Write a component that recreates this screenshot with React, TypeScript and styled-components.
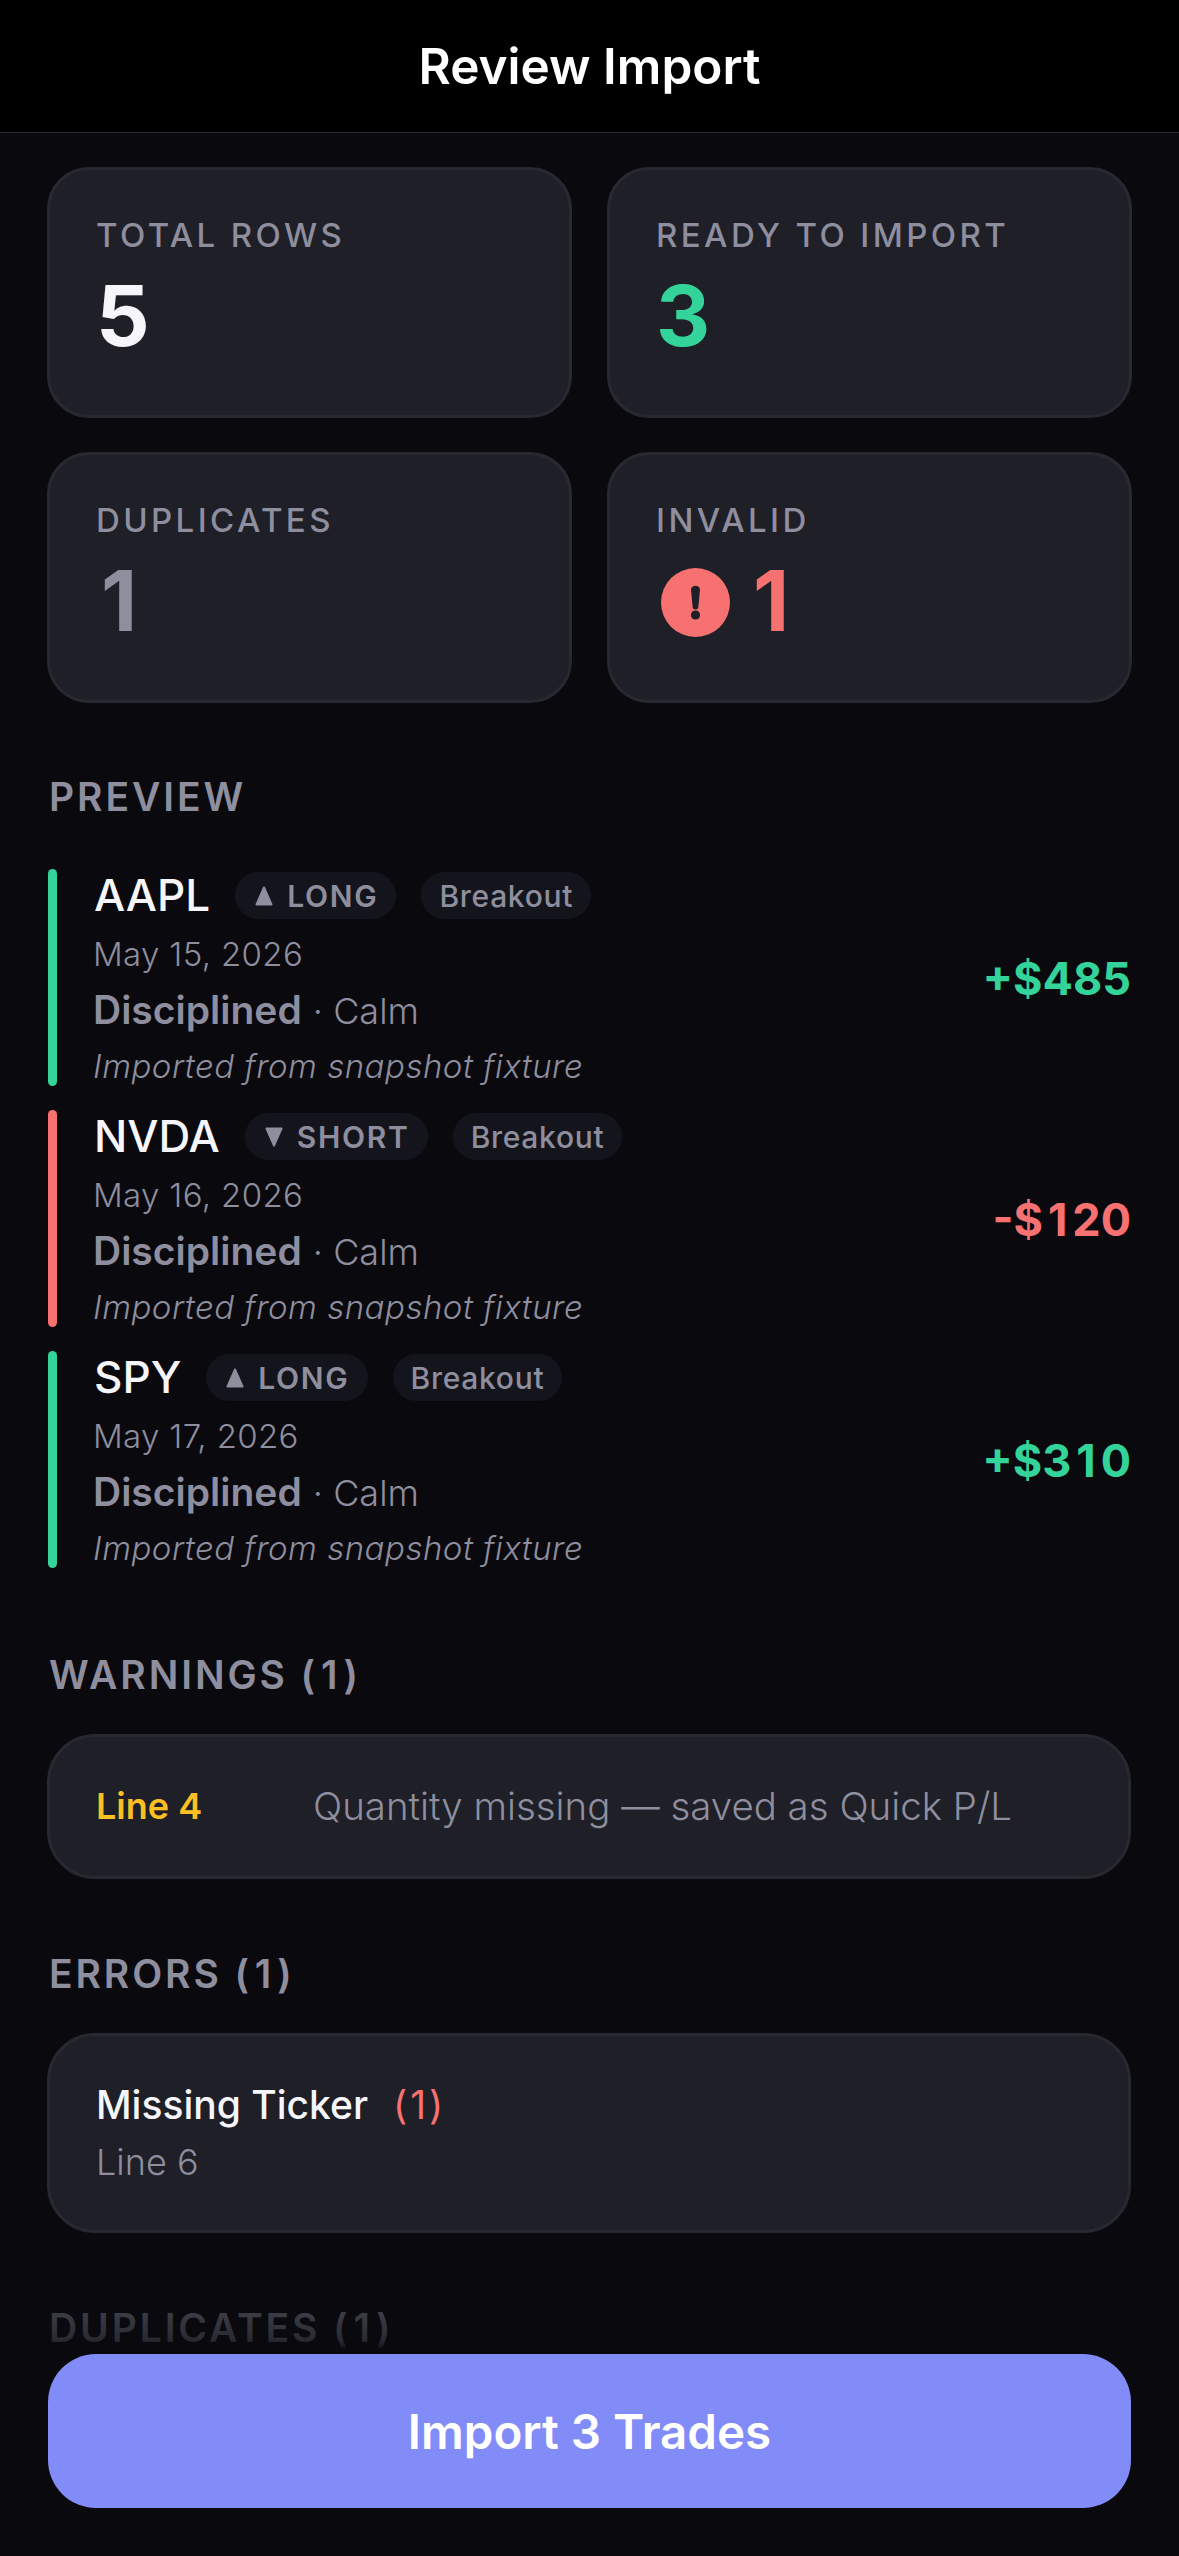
import React, { ReactElement } from "react";
import styled, { createGlobalStyle } from "styled-components";

const GlobalStyle = createGlobalStyle`
  html, body {
    margin: 0;
    padding: 0;
    background: #09090e;
  }
  * {
    box-sizing: border-box;
  }
`;

const GREEN = "#34d399";
const RED = "#f87171";
const AMBER = "#fbbf24";
const MUTED = "#8e8e9e";
const WHITE = "#f5f5fa";

const Screen = styled.div`
  position: relative;
  width: 1179px;
  height: 2556px;
  overflow: hidden;
  background: #09090e;
  font-family: Inter, "Noto Sans", sans-serif;
  color: ${WHITE};
`;

const Header = styled.header`
  display: flex;
  align-items: center;
  justify-content: center;
  height: 133px;
  background: #000;
  border-bottom: 1px solid #2c2c30;
`;

const Title = styled.h1`
  margin: 0;
  font-size: 49.5px;
  line-height: 60px;
  font-weight: 600;
  color: #fff;
`;

const Content = styled.main`
  padding: 34px 48px 0 47px;
`;

const StatGrid = styled.div`
  display: grid;
  grid-template-columns: 525px 525px;
  gap: 34px 35px;
`;

const StatCard = styled.div`
  height: 251px;
  padding: 45px 45px 0 46px;
  background: #1e1f27;
  border: 3px solid #282930;
  border-radius: 42px;
`;

const StatLabel = styled.div`
  font-size: 33px;
  line-height: 40px;
  font-weight: 500;
  letter-spacing: 3.4px;
  color: ${MUTED};
`;

const StatValue = styled.div<{ $color: string }>`
  display: flex;
  align-items: center;
  margin-top: 19px;
  height: 84px;
  font-size: 84px;
  line-height: 84px;
  font-weight: 700;
  color: ${(p) => p.$color};
`;

const AlertIcon = styled.svg`
  width: 69px;
  height: 69px;
  margin: 3px 18px 0 5px;
  flex: none;
`;

const One = styled.span<{ $pad: number }>`
  padding: 0 ${(p) => p.$pad}px;
`;

const withOnes = (text: string, pad: number) =>
  text.split("1").flatMap((part, i) =>
    i === 0
      ? [part]
      : [
          <One key={i} $pad={pad}>
            1
          </One>,
          part,
        ]
  );

const SectionHeading = styled.h2`
  margin: 74px 0 39px 2px;
  font-size: 39px;
  line-height: 40px;
  font-weight: 600;
  letter-spacing: 2.9px;
  color: ${MUTED};
`;

const TradeList = styled.div`
  display: flex;
  flex-direction: column;
  gap: 24px;
  padding: 13px 0 12px;
`;

const TradeRow = styled.div`
  display: flex;
  align-items: stretch;
  height: 217px;
`;

const SideBar = styled.div<{ $color: string }>`
  width: 9px;
  margin-left: 1px;
  border-radius: 5px;
  background: ${(p) => p.$color};
`;

const TradeBody = styled.div`
  flex: 1;
  margin-left: 36px;
`;

const TradeTop = styled.div`
  display: flex;
  align-items: center;
  gap: 25px;
  height: 53px;
`;

const Ticker = styled.span`
  margin-left: 1px;
  font-size: 44px;
  line-height: 53px;
  font-weight: 500;
  color: ${WHITE};
`;

const Pill = styled.span`
  display: inline-flex;
  align-items: center;
  gap: 12px;
  height: 47px;
  padding: 0 18px;
  border-radius: 24px;
  background: #14151c;
  font-size: 30px;
  font-weight: 500;
  color: ${MUTED};
`;

const SidePill = styled(Pill)`
  font-weight: 600;
  letter-spacing: 1.7px;
`;

const TagPill = styled(Pill)`
  letter-spacing: 0.7px;
`;

const Triangle = styled.svg`
  width: 22px;
  height: 22px;
  flex: none;
`;

const TradeDate = styled.div`
  margin-top: 10px;
  font-size: 33px;
  line-height: 44px;
  font-weight: 350;
  letter-spacing: 0.35px;
  color: ${MUTED};
`;

const Mood = styled.div`
  margin-top: 9px;
  font-size: 36px;
  line-height: 50px;
  font-weight: 350;
  color: ${MUTED};
`;

const Discipline = styled.span`
  font-size: 39px;
  font-weight: 600;
  margin-right: 1px;
`;

const Note = styled.div`
  margin-top: 10px;
  font-size: 33px;
  line-height: 40px;
  font-style: italic;
  font-weight: 350;
  letter-spacing: 0.5px;
  color: ${MUTED};
`;

const Pnl = styled.div<{ $color: string }>`
  align-self: center;
  margin-top: 1px;
  font-size: 45px;
  font-weight: 700;
  color: ${(p) => p.$color};
`;

const NoticeCard = styled.div`
  background: #1e1f27;
  border: 3px solid #282930;
  border-radius: 48px;
  padding: 44px 45px 46px 46px;
`;

const WarningRow = styled.div`
  display: flex;
  align-items: center;
  height: 49px;
`;

const WarningLine = styled.span`
  width: 217px;
  flex: none;
  font-size: 36px;
  font-weight: 600;
  color: ${AMBER};
`;

const WarningText = styled.span`
  font-size: 38.45px;
  font-weight: 350;
  color: ${MUTED};
`;

const ErrorTitle = styled.div`
  font-size: 39px;
  line-height: 50px;
  font-weight: 500;
  color: ${WHITE};
`;

const ErrorCount = styled.span`
  margin-left: 25px;
  font-weight: 400;
  color: ${RED};
`;

const ErrorLine = styled.div`
  margin-top: 10px;
  font-size: 36px;
  line-height: 44px;
  font-weight: 350;
  color: ${MUTED};
`;

const NextSection = styled(SectionHeading)`
  margin-top: 75px;
`;

const Footer = styled.div`
  position: absolute;
  left: 0;
  right: 0;
  bottom: 0;
  padding: 64px 48px 48px;
  background: linear-gradient(
    to bottom,
    rgba(9, 9, 14, 0) 0,
    rgba(9, 9, 14, 0.62) 23px,
    rgba(9, 9, 14, 0.75) 49px,
    #09090e 64px
  );
`;

const ImportButton = styled.button`
  display: block;
  width: 100%;
  height: 154px;
  border: 0;
  border-radius: 48px;
  background: #818cf8;
  color: #fff;
  font-family: inherit;
  font-size: 47.5px;
  font-weight: 600;
`;

const Up = () => (
  <Triangle viewBox="0 0 22 22">
    <path d="M11 2.5 L18.5 19.5 H3.5 Z" fill={MUTED} stroke={MUTED} strokeWidth="2" strokeLinejoin="round" />
  </Triangle>
);

const Down = () => (
  <Triangle viewBox="0 0 22 22">
    <path d="M11 19.5 L18.5 2.5 H3.5 Z" fill={MUTED} stroke={MUTED} strokeWidth="2" strokeLinejoin="round" />
  </Triangle>
);

const trades = [
  { ticker: "AAPL", side: "LONG", date: "May 15, 2026", pnl: "+$485", color: GREEN },
  { ticker: "NVDA", side: "SHORT", date: "May 16, 2026", pnl: "-$120", color: RED },
  { ticker: "SPY", side: "LONG", date: "May 17, 2026", pnl: "+$310", color: GREEN },
];

function App(): ReactElement {
  return (
    <Screen>
      <GlobalStyle />
      <Header>
        <Title>Review Import</Title>
      </Header>
      <Content>
        <StatGrid>
          <StatCard>
            <StatLabel>TOTAL ROWS</StatLabel>
            <StatValue $color={WHITE}>5</StatValue>
          </StatCard>
          <StatCard>
            <StatLabel>READY TO IMPORT</StatLabel>
            <StatValue $color={GREEN}>3</StatValue>
          </StatCard>
          <StatCard>
            <StatLabel>DUPLICATES</StatLabel>
            <StatValue $color={MUTED}>
              <One $pad={5}>1</One>
            </StatValue>
          </StatCard>
          <StatCard>
            <StatLabel>INVALID</StatLabel>
            <StatValue $color={RED}>
              <AlertIcon viewBox="0 0 69 69">
                <circle cx="34.5" cy="34.5" r="34.5" fill={RED} />
                <path d="M30 21.5 a4.6 4.6 0 0 1 9 0 l-1.6 17 a2.9 2.9 0 0 1 -5.8 0 Z" fill="#1e1f27" />
                <circle cx="34.5" cy="47" r="4.6" fill="#1e1f27" />
              </AlertIcon>
              <One $pad={5}>1</One>
            </StatValue>
          </StatCard>
        </StatGrid>

        <SectionHeading>PREVIEW</SectionHeading>
        <TradeList>
          {trades.map((t) => (
            <TradeRow key={t.ticker}>
              <SideBar $color={t.color} />
              <TradeBody>
                <TradeTop>
                  <Ticker>{t.ticker}</Ticker>
                  <SidePill>
                    {t.side === "LONG" ? <Up /> : <Down />}
                    {t.side}
                  </SidePill>
                  <TagPill>Breakout</TagPill>
                </TradeTop>
                <TradeDate>{t.date}</TradeDate>
                <Mood>
                  <Discipline>Disciplined</Discipline> · Calm
                </Mood>
                <Note>Imported from snapshot fixture</Note>
              </TradeBody>
              <Pnl $color={t.color}>{withOnes(t.pnl, 5)}</Pnl>
            </TradeRow>
          ))}
        </TradeList>

        <NextSection>WARNINGS {withOnes("(1)", 3)}</NextSection>
        <NoticeCard>
          <WarningRow>
            <WarningLine>Line 4</WarningLine>
            <WarningText>Quantity missing — saved as Quick P/L</WarningText>
          </WarningRow>
        </NoticeCard>

        <NextSection>ERRORS {withOnes("(1)", 3)}</NextSection>
        <NoticeCard>
          <ErrorTitle>
            Missing Ticker<ErrorCount>{withOnes("(1)", 3)}</ErrorCount>
          </ErrorTitle>
          <ErrorLine>Line 6</ErrorLine>
        </NoticeCard>

        <NextSection>DUPLICATES {withOnes("(1)", 3)}</NextSection>
      </Content>
      <Footer>
        <ImportButton>Import 3 Trades</ImportButton>
      </Footer>
    </Screen>
  );
}

export default App;
